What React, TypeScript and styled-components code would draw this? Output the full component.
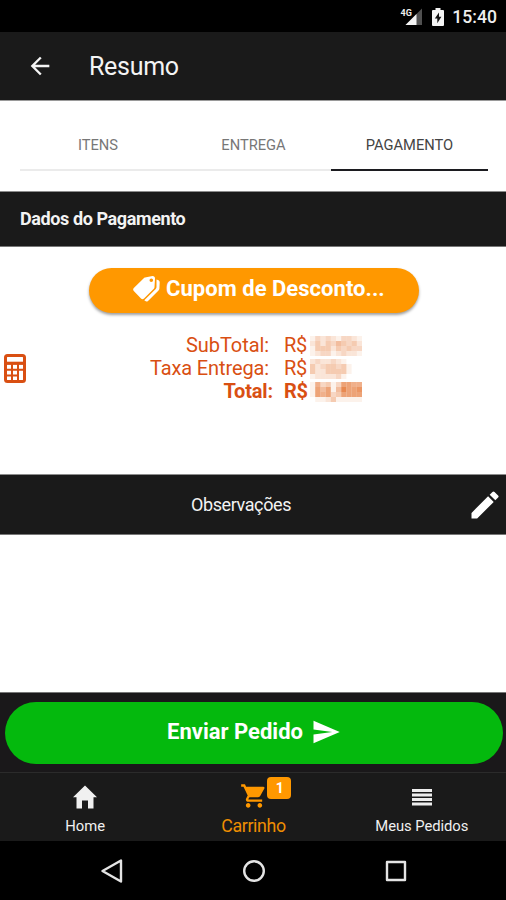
import React from 'react';
import styled, { createGlobalStyle } from 'styled-components';
import { MdArrowBack, MdModeEdit, MdSend, MdShoppingCart } from 'react-icons/md';

const GlobalStyle = createGlobalStyle`
  *, *::before, *::after { box-sizing: border-box; }
  body { margin: 0; background: #fff; font-family: Roboto, sans-serif; }
  svg { display: block; flex: none; }
`;

const Screen = styled.div`
  width: 506px;
  height: 900px;
  display: flex;
  flex-direction: column;
  overflow: hidden;
  background: #fff;
`;

const StatusBar = styled.div`
  height: 32px;
  flex: none;
  display: flex;
  align-items: center;
  justify-content: flex-end;
  padding: 1px 9px 0 0;
  background: #000;
`;

const Battery = styled.svg`
  margin-left: 10px;
`;

const Clock = styled.span`
  margin-left: 8px;
  color: #eee;
  font-size: 17.6px;
  font-weight: 500;
  line-height: 20px;
`;

const Header = styled.header`
  height: 69px;
  flex: none;
  display: flex;
  align-items: center;
  padding: 0 0 1px 26px;
  background: #1a1a1a;
  border-bottom: 1px solid #9a9a9a;
  color: #f4f4f4;
`;

const Title = styled.h1`
  margin: 2px 0 0 35px;
  font-size: 25px;
  font-weight: 400;
  line-height: 30px;
  letter-spacing: -0.3px;
`;

const Tabs = styled.nav`
  height: 90px;
  flex: none;
  display: grid;
  grid-template-columns: 156px 155px 157px;
  padding: 18px 18px 0 20px;
`;

const Tab = styled.div<{ $active?: boolean }>`
  height: 52px;
  display: flex;
  align-items: center;
  justify-content: center;
  padding-top: 2px;
  border-bottom: ${p => (p.$active ? '2px solid #1c1c20' : '2px solid #ebebeb')};
  color: ${p => (p.$active ? '#444' : '#777')};
  font-size: 14.7px;
  line-height: 20px;
`;

const SectionBar = styled.div<{ $height: number; $center?: boolean }>`
  height: ${p => p.$height}px;
  flex: none;
  display: grid;
  grid-template-columns: ${p => (p.$center ? '1fr 36px' : '1fr')};
  align-items: center;
  justify-items: ${p => (p.$center ? 'center' : 'start')};
  padding: 0 3px 0 ${p => (p.$center ? 15 : 20)}px;
  background: #1a1a1a;
  border-top: 1px solid #8c8c8c;
  border-bottom: 1px solid #777;
  color: #f3f3f3;
`;

const SectionTitle = styled.h2<{ $bold?: boolean }>`
  margin: 0;
  font-size: 18px;
  font-weight: ${p => (p.$bold ? 700 : 400)};
  line-height: 22px;
  letter-spacing: -0.4px;
`;

const Payment = styled.section`
  height: 227px;
  flex: none;
  padding-top: 21px;
`;

const CouponButton = styled.button`
  width: 330px;
  height: 45px;
  margin: 0 0 0 89px;
  padding: 0 32px 3px 44px;
  display: flex;
  align-items: center;
  border: 0;
  border-radius: 23px;
  background: #ff9800;
  box-shadow: 0 2px 3px rgba(0, 0, 0, 0.38);
  color: #fff;
  font: 700 22px/26px Roboto, sans-serif;
  letter-spacing: 0.03px;
  white-space: nowrap;
  gap: 5px;
`;

const Summary = styled.div`
  display: grid;
  grid-template-columns: 26px 1fr;
  align-items: center;
  padding: 0 0 0 4px;
  margin-top: 21px;
  color: #d94f12;
`;

const Totals = styled.div`
  display: grid;
  grid-auto-rows: 23px;
`;

const TotalRow = styled.div<{ $strong?: boolean }>`
  display: grid;
  grid-template-columns: ${p => (p.$strong ? '243px 37px' : '239px 41px')} 60px;
  align-items: center;
  font-size: 20px;
  font-weight: ${p => (p.$strong ? 700 : 400)};
  line-height: 23px;
`;

const Label = styled.span<{ $spacing: number }>`
  text-align: right;
  letter-spacing: ${p => p.$spacing}px;
`;

const Currency = styled.span`
  justify-self: end;
  width: 26px;
  letter-spacing: -0.4px;
`;

const Notes = styled.section`
  height: 157px;
  flex: none;
`;

const Footer = styled.div`
  height: 81px;
  flex: none;
  padding: 9px 3px 0 5px;
  background: #1a181a;
  border-top: 1px solid #777;
  border-bottom: 1px solid #2b2b2b;
`;

const SendButton = styled.button`
  width: 498px;
  height: 62px;
  padding: 0 0 2px;
  display: flex;
  align-items: center;
  justify-content: center;
  gap: 8px;
  border: 0;
  border-radius: 31px;
  background: #04b90d;
  color: #fff;
  font: 700 22px/26px Roboto, sans-serif;
`;

const BottomTabs = styled.nav`
  height: 68px;
  flex: none;
  display: grid;
  grid-template-columns: repeat(3, 1fr);
  padding-left: 1px;
  background: #1a1a1a;
`;

const BottomTab = styled.div<{ $active?: boolean }>`
  display: flex;
  flex-direction: column;
  align-items: center;
  padding-top: 8px;
  gap: ${p => (p.$active ? 2 : 4)}px;
  color: ${p => (p.$active ? '#ee8e02' : '#f0f0f0')};
  font-size: ${p => (p.$active ? 17.8 : 14.8)}px;
  letter-spacing: ${p => (p.$active ? -0.35 : -0.05)}px;
  line-height: ${p => (p.$active ? 22 : 18)}px;
`;

const IconSlot = styled.div`
  position: relative;
  height: 32px;
  display: flex;
  align-items: center;
`;

const CartSlot = styled(IconSlot)`
  padding: 0 0 3px 2px;
  color: #ff9800;
`;

const Badge = styled.span`
  position: absolute;
  left: 29px;
  top: -4px;
  width: 24px;
  height: 22px;
  border-radius: 4px;
  background: #ff9800;
  color: #fff;
  font-size: 14px;
  font-weight: 700;
  line-height: 22px;
  text-align: center;
`;

const SystemNav = styled.div`
  height: 59px;
  flex: none;
  display: grid;
  grid-template-columns: 142px 142px 142px;
  justify-content: center;
  justify-items: center;
  align-items: center;
  padding-left: 2px;
  background: #000;
`;

const SignalIcon = () => (
  <svg width="22" height="20" viewBox="0 0 22 20">
    <path d="M22 1.500v16.500H5.500z" fill="#505050" />
    <path d="M16.500 7V18H5.500z" fill="#f4f4f4" />
    <text x="0.500" y="8.500" fill="#eee" fontFamily="Roboto, sans-serif" fontSize="9" fontWeight="700">4G</text>
  </svg>
);

const BatteryIcon = () => (
  <Battery width="12" height="20" viewBox="0 0 12 20">
    <path d="M3.500 1h5v2H11q1 0 1 1v14q0 1-1 1H1q-1 0-1-1V4q0-1 1-1h2.500z" fill="#f4f4f4" />
    <path d="M7 5.500 2.800 11.500h2.500v4.700L9.400 9.800H7z" fill="#111" />
  </Battery>
);

const TagsIcon = () => (
  <svg width="28" height="28" viewBox="0 0 28 28" fill="currentColor">
    <path
      fillRule="evenodd"
      d="M12 2.500 19.500 1Q22 1 22 3.500L21.500 12Q21.500 13 20.800 13.700L11 23.500Q9.500 25 8 23.500L.8 16Q-.5 14.500.8 13L10.500 3.400Q11.200 2.700 12 2.500ZM18.300 3.500a1.800 1.800 0 1 0 0 3.600 1.800 1.800 0 0 0 0-3.600Z"
    />
    <path d="M23.500 4.500Q26.800 5 26.700 7.500L26.400 13.500Q26.400 14.600 25.500 15.500L15 26Q13.500 27.200 12 25.800L11.300 25.200 22.700 14Q23.500 13.200 23.500 12Z" />
  </svg>
);

const CalculatorIcon = () => (
  <svg width="22" height="29" viewBox="0 0 22 29" fill="none" stroke="currentColor">
    <rect x="1.500" y="1.500" width="19" height="26" rx="2" strokeWidth="3" />
    <path d="M2 9.300h18" strokeWidth="3.200" />
    <path d="M2 15.700h18M2 21.500h12.500" strokeWidth="2" />
    <path d="M8 10v17M14 10v17" strokeWidth="2" />
  </svg>
);

const HomeIcon = () => (
  <svg width="24" height="24" viewBox="0 0 24 24" fill="currentColor">
    <path d="M12 0.500 24 12.300h-3.500V23.500H15v-8H9v8H3.500V12.300H0z" />
  </svg>
);

// Opacity of each mosaic cell, in tenths, row by row.
const masks = [
  ['1323213321', '2424354342', '1444243433', '1233123221'],
  ['23223210', '42344341', '42244441', '12222310'],
  ['1634137766', '1757159778', '1767347777', '0112411111'],
];

const MaskedAmount = ({ cells }: { cells: string[] }) => (
  <svg width="52" height="20" viewBox="0 0 52 20">
    {cells.flatMap((row, y) =>
      row.split('').map((v, x) => (
        <rect key={`${x}-${y}`} x={x * 5.2} y={y * 5} width="5.2" height="5" fill="#e67c3d" opacity={Number(v) / 10} />
      )),
    )}
  </svg>
);

const rows = [
  { label: 'SubTotal:', spacing: -0.08 },
  { label: 'Taxa Entrega:', spacing: -0.12 },
  { label: 'Total:', spacing: -0.15, strong: true },
];

export default function App() {
  return (
    <>
      <GlobalStyle />
      <Screen>
        <StatusBar>
          <SignalIcon />
          <BatteryIcon />
          <Clock>15:40</Clock>
        </StatusBar>
        <Header>
          <MdArrowBack size={28} />
          <Title>Resumo</Title>
        </Header>
        <Tabs>
          <Tab>ITENS</Tab>
          <Tab>ENTREGA</Tab>
          <Tab $active>PAGAMENTO</Tab>
        </Tabs>
        <SectionBar $height={56}>
          <SectionTitle $bold>Dados do Pagamento</SectionTitle>
        </SectionBar>
        <Payment>
          <CouponButton>
            <TagsIcon />
            Cupom de Desconto...
          </CouponButton>
          <Summary>
            <CalculatorIcon />
            <Totals>
              {rows.map((row, i) => (
                <TotalRow key={row.label} $strong={row.strong}>
                  <Label $spacing={row.spacing}>{row.label}</Label>
                  <Currency>R$</Currency>
                  <MaskedAmount cells={masks[i]} />
                </TotalRow>
              ))}
            </Totals>
          </Summary>
        </Payment>
        <SectionBar $height={61} $center>
          <SectionTitle>Observações</SectionTitle>
          <MdModeEdit size={36} color="#fff" />
        </SectionBar>
        <Notes />
        <Footer>
          <SendButton>
            Enviar Pedido
            <MdSend size={30} />
          </SendButton>
        </Footer>
        <BottomTabs>
          <BottomTab>
            <IconSlot><HomeIcon /></IconSlot>
            Home
          </BottomTab>
          <BottomTab $active>
            <CartSlot>
              <MdShoppingCart size={28} />
              <Badge>1</Badge>
            </CartSlot>
            Carrinho
          </BottomTab>
          <BottomTab>
            <IconSlot>
              <svg width="20" height="17" viewBox="0 0 20 17">
                <path d="M0 1.500h20M0 6h20M0 10.500h20M0 15h20" stroke="#eee" strokeWidth="3" />
              </svg>
            </IconSlot>
            Meus Pedidos
          </BottomTab>
        </BottomTabs>
        <SystemNav>
          <svg width="24" height="24" viewBox="0 0 24 24" fill="none" stroke="#e4e4e4" strokeWidth="2.400" strokeLinejoin="round">
            <path d="M21 1.500v21L2.500 12z" />
          </svg>
          <svg width="24" height="24" viewBox="0 0 24 24" fill="none" stroke="#e4e4e4" strokeWidth="2.400">
            <circle cx="12" cy="12" r="9.800" />
          </svg>
          <svg width="24" height="24" viewBox="0 0 24 24" fill="none" stroke="#e4e4e4" strokeWidth="2.400" strokeLinejoin="round">
            <rect x="3" y="3" width="18" height="18" />
          </svg>
        </SystemNav>
      </Screen>
    </>
  );
}
